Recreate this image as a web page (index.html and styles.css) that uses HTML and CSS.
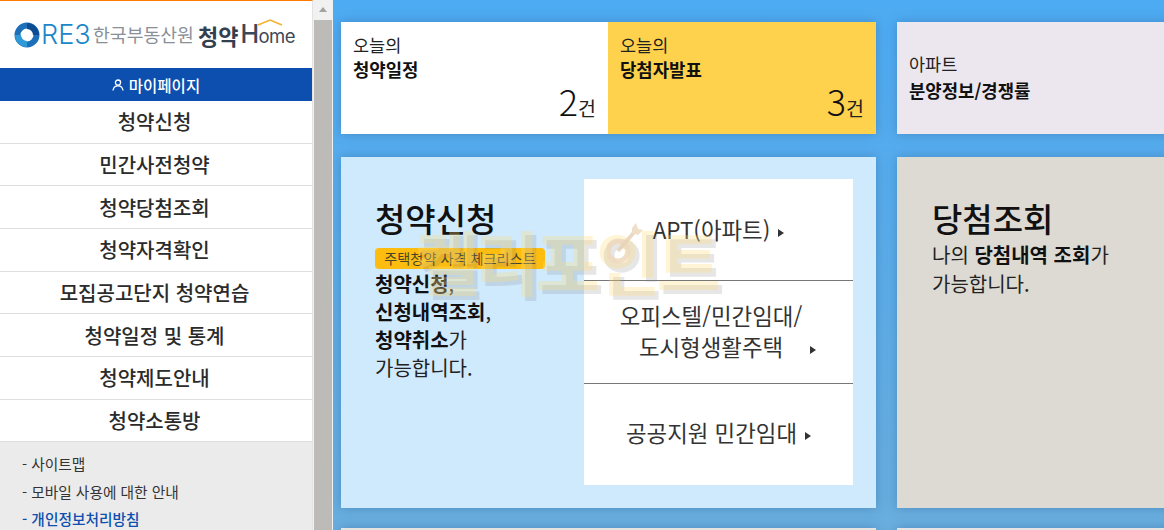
FILE: index.html
```html
<!DOCTYPE html>
<html lang="ko">
<head>
<meta charset="utf-8">
<title>청약Home</title>
<link rel="stylesheet" href="styles.css">
</head>
<body>
<div class="page">
  <aside class="side">
    <div class="logo">
      <svg class="logo-mark" viewBox="0 0 26 26" width="26" height="26" aria-hidden="true">
        <circle cx="13" cy="13" r="9.5" fill="none" stroke="#1c6fb8" stroke-width="6"/>
        <path d="M13 1a12 12 0 0 1 12 12h-6a6 6 0 0 0-6-6z" fill="#0d4c92"/>
        <path d="M13 25A12 12 0 0 1 1 13h6a6 6 0 0 0 6 6z" fill="#2f9ad8"/>
        <circle cx="13" cy="13" r="4" fill="#fff"/>
      </svg>
      <span class="logo-reb">RE3</span>
      <span class="logo-org">한국부동산원</span>
      <span class="logo-ch">청약</span>
      <span class="logo-home">H<span class="logo-ome">ome</span>
        <svg class="logo-roof" viewBox="0 0 26 7" width="26" height="7" aria-hidden="true"><path d="M1 6 13 1l12 5" fill="none" stroke="#f4b02c" stroke-width="1.6"/></svg>
      </span>
    </div>
    <a class="mypage">
      <svg viewBox="0 0 12 12" width="12" height="12" aria-hidden="true"><circle cx="6" cy="3.6" r="2.6" fill="none" stroke="#fff" stroke-width="1.3"/><path d="M1 11.500c.4-3 2.400-4.600 5-4.600s4.600 1.600 5 4.600" fill="none" stroke="#fff" stroke-width="1.3"/></svg>
      마이페이지
    </a>
    <nav class="menu">
      <a>청약신청</a>
      <a>민간사전청약</a>
      <a>청약당첨조회</a>
      <a>청약자격확인</a>
      <a>모집공고단지 청약연습</a>
      <a>청약일정 및 통계</a>
      <a>청약제도안내</a>
      <a>청약소통방</a>
    </nav>
    <ul class="links">
      <li>- 사이트맵</li>
      <li>- 모바일 사용에 대한 안내</li>
      <li class="strong">- 개인정보처리방침</li>
    </ul>
  </aside>
  <div class="scrollbar"><div class="scroll-up"></div><div class="scroll-thumb"></div></div>
  <main class="main">
    <div class="row row-top">
      <div class="duo">
        <section class="stat">
          <p class="lead">오늘의</p>
          <p class="name">청약일정</p>
          <p class="count"><b>2</b>건</p>
        </section>
        <section class="stat stat-yellow">
          <p class="lead">오늘의</p>
          <p class="name">당첨자발표</p>
          <p class="count"><b>3</b>건</p>
        </section>
      </div>
      <section class="info">
        <p class="lead">아파트</p>
        <p class="name">분양정보/경쟁률</p>
      </section>
    </div>
    <div class="row row-main">
      <section class="panel panel-blue">
        <div class="panel-text">
          <h2>청약신청</h2>
          <span class="badge">주택청약 사격 체크리스트</span>
          <p><b>청약신청</b>,<br><b>신청내역조회</b>,<br><b>청약취소</b>가<br>가능합니다.</p>
        </div>
        <div class="choices">
          <a class="apt">APT(아파트)<i class="tri"></i></a>
          <a class="office"><span class="line-one">오피스텔/민간임대/</span><br><span class="line-two">도시형생활주택<i class="tri tri-far"></i></span></a>
          <a class="public">공공지원 민간임대<i class="tri"></i></a>
        </div>
      </section>
      <section class="panel panel-beige">
        <div class="panel-text panel-text-wide">
          <h2>당첨조회</h2>
          <p class="result">나의 <b>당첨내역 조회</b>가<br>가능합니다.</p>
        </div>
        <div class="choices choices-cut">
          <a class="apt"></a>
          <a class="office"></a>
          <a class="public"></a>
        </div>
      </section>
    </div>
    <div class="row row-next">
      <section class="next"></section>
      <section class="next"></section>
    </div>
  </main>
  <div class="watermark">
    <span>켈리포인트</span>
    <svg class="dart" viewBox="0 0 36 44" width="36" height="44" aria-hidden="true">
      <circle cx="11" cy="29" r="10" fill="none" stroke="#eed9c0" stroke-width="5"/>
      <path d="M11 29 29 8" stroke="#e8d2b6" stroke-width="3.500"/>
      <path d="M25 6 29 1l2 6 5 1-5 5-6-2z" fill="#eed9c0"/>
    </svg>
  </div>
</div>
</body>
</html>
```
FILE: styles.css
```css
* { box-sizing: border-box; }
html, body { margin: 0; height: 100%; overflow: hidden; }
body { font-family: "Noto Sans CJK KR", "Noto Sans", sans-serif; color: #222; }
p, h2, ul { margin: 0; padding: 0; }

.page { position: relative; display: flex; width: 1164px; height: 530px; overflow: hidden; }

/* sidebar */
.side { flex: 0 0 313px; height: 530px; background: #ebebeb; border-top: 1px solid #ff7a00; border-right: 1px solid #e3e3e3; overflow: hidden; }
.logo { display: flex; align-items: center; height: 67px; padding: 0 0 0 14px; background: #fff; white-space: nowrap; }
.logo-mark { flex: none; }
.logo-reb { margin-left: 1px; width: 52px; font: 300 27px/1 "Inter", sans-serif; letter-spacing: 0; color: #1b86c9; }
.logo-org { font-size: 18.3px; line-height: 1; color: #8a9098; }
.logo-ch { margin-left: 4px; font-size: 22px; line-height: 1; font-weight: 700; color: #33404f; }
.logo-home { position: relative; margin-left: 2px; font: 500 25px/1 "Inter", sans-serif; letter-spacing: -.5px; color: #3c4858; }
.logo-ome { font-size: 18.5px; font-weight: 400; }
.logo-roof { position: absolute; left: 17px; top: -3px; }
.mypage { display: flex; align-items: center; justify-content: center; gap: 5px; height: 33px; padding-top: 1px; font-size: 15.5px; font-weight: 500; color: #fff; background: #0c4fae; }
.menu { display: flex; flex-direction: column; background: #fff; }
.menu a { display: flex; align-items: center; justify-content: center; height: 42.66px; padding-right: 3px; font-size: 20px; font-weight: 500; color: #2b2b2b; border-bottom: 1px solid #dedede; }
.links { list-style: none; padding: 8px 0 0 22px; font-size: 14.7px; color: #333; }
.links li { height: 27.5px; line-height: 27px; }
.links .strong { font-weight: 500; color: #0c4fae; }

/* scrollbar */
.scrollbar { flex: 0 0 20px; height: 530px; background: #f1f1f1; padding: 0 1px; }
.scroll-up { height: 20px; position: relative; }
.scroll-up::after { content: ""; position: absolute; left: 5px; top: 7px; border-left: 4px solid transparent; border-right: 4px solid transparent; border-bottom: 5px solid #a3a3a3; }
.scroll-thumb { height: 510px; background: #bdbbb8; }

/* main */
.main { flex: 1; height: 530px; padding: 22px 0 0 8px; background: linear-gradient(#4dabf3, #69aede); overflow: hidden; }
.row { display: flex; gap: 21px; width: 1000px; }
.row-top { height: 112px; }
.row-main { height: 351px; margin-top: 23px; }
.row-next { height: 40px; margin-top: 20px; }
.duo { display: flex; width: 535px; box-shadow: 0 0 10px rgba(50,100,150,.45); }
.stat { position: relative; flex: 0 0 267px; padding: 10px 12px; background: #fff; }
.stat-yellow { flex: 0 0 268px; background: #ffd24d; }
.lead { font-size: 17.5px; line-height: 26px; color: #222; }
.name { font-size: 17.8px; line-height: 22px; font-weight: 700; color: #111; }
.count { position: absolute; right: 12px; bottom: 8px; font-size: 19.5px; line-height: 36px; color: #222; }
.count b { font-size: 36px; font-weight: 300; color: #111; }
.info { width: 444px; padding: 29px 12px 0; background: #ece7ef; box-shadow: 0 0 10px rgba(50,100,150,.45); }
.info .name { line-height: 24px; margin-top: 1px; }

.panel { display: flex; justify-content: space-between; width: 535px; padding: 22px 23px 23px 34px; box-shadow: 0 0 10px rgba(50,100,150,.45); }
.panel-blue { background: #cfe9fd; }
.panel-beige { width: 444px; background: #dddad3; padding-right: 0; padding-left: 35px; }
.panel-text { width: 209px; position: relative; }
.panel-text-wide { width: 208px; }
.panel-text h2 { font-size: 33px; line-height: 40px; margin-top: 19px; font-weight: 500; color: #111; }
.badge { display: block; width: 170px; height: 21px; margin-top: 10px; background: #fdbd10; border-radius: 4px; font-size: 14.2px; line-height: 20px; text-align: center; color: #4a4426; white-space: nowrap; }
.panel-text p { margin-top: 1px; font-size: 20px; line-height: 28px; color: #222; white-space: nowrap; }
.panel-text p.result { margin-top: 3px; line-height: 28.5px; }
.panel-text b { font-weight: 700; color: #111; }

.choices { display: flex; flex-direction: column; width: 269px; height: 306px; background: #fff; flex: none; }
.choices-cut { width: 24px; margin-left: 10px; }
.choices a { display: block; text-align: center; font-size: 22.4px; color: #333; border-bottom: 1px solid #777; white-space: nowrap; }
.choices .apt { height: 102px; line-height: 100px; }
.choices .office { height: 103px; padding-top: 19px; line-height: 31px; }
.choices .public { height: 101px; line-height: 96px; border-bottom: 0; }
.line-one { padding-right: 15px; }
.line-two { padding-left: 18px; }
.tri { display: inline-block; margin-left: 8px; vertical-align: 2px; border-top: 4.5px solid transparent; border-bottom: 4.5px solid transparent; border-left: 6px solid #333; }
.tri-far { margin-left: 27px; }

.next { flex: 0 0 535px; background: #e6e4e0; box-shadow: 0 0 10px rgba(50,100,150,.45); }
.next + .next { flex: 0 0 444px; background: #e9e4e4; }

/* watermark over content */
.watermark { position: absolute; left: 415px; top: 222px; width: 310px; height: 90px; pointer-events: none; }
.watermark span { position: absolute; left: 0; top: -7px; font-size: 69px; line-height: 90px; font-weight: 900; letter-spacing: -3px; white-space: nowrap; color: rgba(255,222,120,.3); text-shadow: 4px 4px 0 rgba(130,130,130,.2); }
.dart { position: absolute; left: 192px; top: 0; opacity: .85; }
```
